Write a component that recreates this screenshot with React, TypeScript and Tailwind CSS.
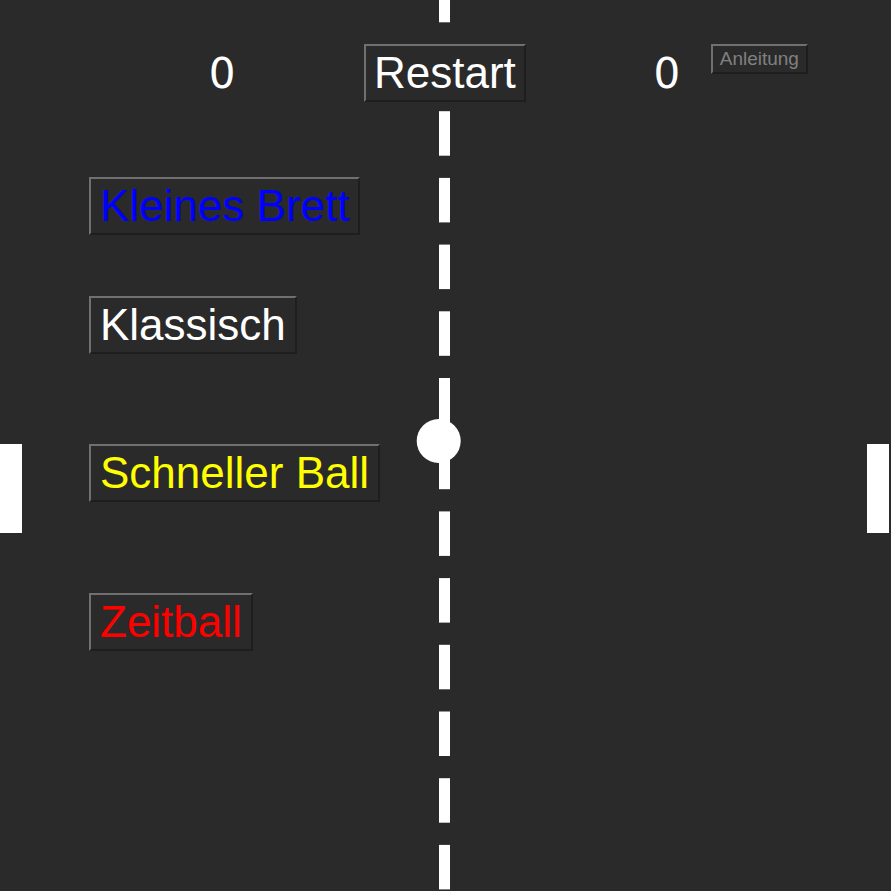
import React from "react";

const W = 891;
const H = 891;

const dashes = Array.from({ length: 15 }, (_, i) => -22.2 + i * 66.7);

const Field = () => (
  <svg className="absolute inset-0" width={W} height={H} viewBox={`0 0 ${W} ${H}`}>
    {dashes.map((y, i) => (
      <rect key={i} x={439} y={y} width={11} height={44.5} fill="#ffffff" />
    ))}
    <rect x={0} y={444} width={22} height={89} fill="#ffffff" />
    <rect x={867} y={444} width={22} height={89} fill="#ffffff" />
    <circle cx={438.7} cy={441} r={22} fill="#ffffff" />
  </svg>
);

const btn =
  "relative border-2 border-solid border-t-[#707070] border-l-[#707070] border-b-[#1e1e1e] border-r-[#1e1e1e] bg-[#2a2a2a] py-[2px] text-[44px] leading-[normal]";

const modes = [
  { label: "Kleines Brett", color: "text-[#0000ff]", mt: "mt-[75px]" },
  { label: "Klassisch", color: "text-white", mt: "mt-[61px]" },
  { label: "Schneller Ball", color: "text-[#ffff00]", mt: "mt-[90px]" },
  { label: "Zeitball", color: "text-[#ff0000]", mt: "mt-[91px]" },
];

export default function App() {
  return (
    <div className="min-h-screen bg-[#2a2a2a]">
      <div
        className="relative w-[891px] h-[891px] overflow-hidden bg-[#2a2a2a]"
        style={{ fontFamily: '"Liberation Sans", Arial, sans-serif' }}
      >
        <Field />

        {/* Score row */}
        <div className="relative flex items-baseline pt-[44px]">
          <div
            className="ml-[192px] w-[60px] text-center text-[42px] leading-[normal] text-white"
            style={{ fontFamily: '"DejaVu Sans", sans-serif' }}
          >
            0
          </div>
          <button className={`${btn} ml-[112px] px-[8px] text-white`}>Restart</button>
          <div
            className="ml-[111px] w-[60px] text-center text-[42px] leading-[normal] text-white"
            style={{ fontFamily: '"DejaVu Sans", sans-serif' }}
          >
            0
          </div>
          <button
            className="relative ml-[14px] w-[97px] self-start border-2 border-solid border-t-[#707070] border-l-[#707070] border-b-[#1e1e1e] border-r-[#1e1e1e] bg-[#2a2a2a] py-[2px] text-center text-[19px] leading-[normal] text-[#808080]"
          >
            Anleitung
          </button>
        </div>

        {/* Game modes */}
        <div className="relative flex flex-col items-start pl-[89px]">
          {modes.map((m) => (
            <button key={m.label} className={`${btn} ${m.mt} px-[9px] ${m.color}`}>
              {m.label}
            </button>
          ))}
        </div>
      </div>
    </div>
  );
}
